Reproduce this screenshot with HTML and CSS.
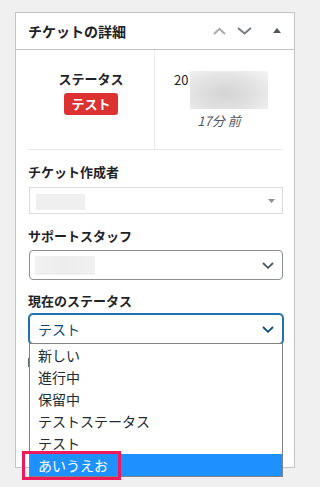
FILE: index.html
```html
<!DOCTYPE html>
<html lang="ja">
<head>
<meta charset="utf-8">
<title>チケットの詳細</title>
<link rel="stylesheet" href="styles.css">
</head>
<body>
<div class="panel">
  <div class="panel-head">
    <h2 class="panel-title">チケットの詳細</h2>
    <div class="head-actions">
      <svg class="ic ic-up" width="13" height="8" viewBox="0 0 13 8"><polyline points="1,7 6.5,1.8 12,7" fill="none" stroke="#a7aaad" stroke-width="2"/></svg>
      <svg class="ic ic-down" width="15" height="8" viewBox="0 0 15 8"><polyline points="1,1 7.5,6.5 14,1" fill="none" stroke="#787c82" stroke-width="2"/></svg>
      <svg class="ic ic-tri" width="8" height="5" viewBox="0 0 8 5"><polygon points="0,5 4,0 8,5" fill="#50575e"/></svg>
    </div>
  </div>
  <div class="panel-body">
    <div class="info">
      <div class="info-col info-status">
        <div class="info-label">ステータス</div>
        <span class="badge">テスト</span>
      </div>
      <div class="info-col info-date">
        <div class="date-row"><span class="date-text">20</span><span class="blur blur-lg"></span></div>
        <div class="ago">17分 前</div>
      </div>
    </div>
    <div class="fields">
      <div class="field field-1">
        <div class="field-label">チケット作成者</div>
        <div class="select select-light">
          <span class="blur blur-a"></span>
          <svg class="sel-tri" width="7" height="4" viewBox="0 0 7 4"><polygon points="0,0 7,0 3.5,4" fill="#8c8f94"/></svg>
        </div>
      </div>
      <div class="field field-2">
        <div class="field-label">サポートスタッフ</div>
        <div class="select select-std">
          <span class="blur blur-b"></span>
          <svg class="sel-chev" width="12" height="7" viewBox="0 0 12 7"><polyline points="1,1 6,5.8 11,1" fill="none" stroke="#50575e" stroke-width="1.8"/></svg>
        </div>
      </div>
      <div class="field field-3">
        <div class="field-label">現在のステータス</div>
        <div class="select select-focus">
          <span class="sel-value">テスト</span>
          <svg class="sel-chev" width="12" height="7" viewBox="0 0 12 7"><polyline points="1,1 6,5.8 11,1" fill="none" stroke="#0a4b78" stroke-width="1.8"/></svg>
          <ul class="dropdown">
            <li class="opt">新しい</li>
            <li class="opt">進行中</li>
            <li class="opt">保留中</li>
            <li class="opt">テストステータス</li>
            <li class="opt">テスト</li>
            <li class="opt opt-active">あいうえお</li>
          </ul>
          <div class="highlight-box"></div>
        </div>
      </div>
      <div class="under-mark"></div>
    </div>
  </div>
</div>
</body>
</html>
```

FILE: styles.css
```css
html, body {
  margin: 0;
  padding: 0;
}
body {
  background: #f0f0f1;
  font-family: "Noto Sans CJK JP", "Noto Sans", sans-serif;
  color: #1d2327;
  width: 309px;
  height: 487px;
  overflow: hidden;
}
.panel {
  margin: 12px 0 0 15px;
  width: 280px;
  box-sizing: border-box;
  background: #fff;
  border: 1px solid #c3c4c7;
}
.panel-head {
  height: 36px;
  border-bottom: 1px solid #c3c4c7;
  display: flex;
  align-items: center;
  justify-content: space-between;
  padding: 0 13px 0 12px;
}
.panel-title {
  margin: 0;
  font-size: 14px;
  font-weight: 600;
  line-height: 18px;
  color: #1d2327;
}
.head-actions {
  display: flex;
  align-items: center;
  padding-bottom: 1px;
}
.ic { display: block; }
.ic-up { margin-right: 11px; }
.ic-down { margin-right: 21px; }
.panel-body {
  padding: 0 12px 100px 12px;
}
.info {
  display: grid;
  grid-template-columns: 127px 127px;
  height: 99px;
  border-bottom: 1px solid #e6e6e6;
}
.info-status {
  border-right: 1px solid #ebebeb;
  padding-top: 20px;
  text-align: center;
}
.info-label {
  font-size: 13px;
  font-weight: 600;
  line-height: 18px;
}
.badge {
  display: inline-block;
  margin-top: 5px;
  width: 54px;
  height: 22px;
  line-height: 22px;
  background: #dc3232;
  color: #fff;
  font-size: 13px;
  font-weight: 700;
  border-radius: 3px;
}
.info-date {
  padding-top: 21px;
}
.date-row {
  display: flex;
  align-items: flex-start;
  padding-left: 19px;
}
.date-text {
  font-size: 13px;
  line-height: 18px;
  width: 16px;
}
.blur { display: block; }
.blur-lg {
  width: 78px;
  height: 38px;
  background: radial-gradient(ellipse at 45% 60%, #d4d4d4 0%, #e0e0e0 45%, #f4f4f4 100%);
}
.ago {
  margin-top: 3px;
  text-align: center;
  font-size: 13px;
  line-height: 18px;
  font-style: italic;
  color: #50575e;
  padding-left: 1px;
}
.fields {
  padding-top: 13px;
}
.field-label {
  font-size: 13px;
  font-weight: 600;
  line-height: 18px;
}
.field-2 { margin-top: 13px; }
.field-3 { margin-top: 12px; }
.select {
  position: relative;
  box-sizing: border-box;
  width: 254px;
  margin-left: 1px;
  display: flex;
  align-items: center;
  background: #fff;
}
.select-light {
  margin-top: 6px;
  height: 27px;
  border: 1px solid #dcdcde;
  padding-left: 6px;
}
.blur-a {
  width: 49px;
  height: 16px;
  margin-top: 3px;
  background: #efefef;
}
.sel-tri {
  position: absolute;
  right: 7px;
  top: 11px;
}
.select-std {
  margin-top: 5px;
  height: 30px;
  border: 1px solid #8c8f94;
  border-radius: 4px;
  padding-left: 5px;
}
.blur-b {
  width: 60px;
  height: 19px;
  background: linear-gradient(90deg, #f2f2f2 0%, #ececec 50%, #f0f0f0 100%);
}
.sel-chev {
  position: absolute;
  right: 8px;
  top: 11px;
}
.select-focus {
  margin-top: 4px;
  height: 30px;
  border: 1px solid #2271b1;
  box-shadow: 0 0 0 1px #2271b1;
  border-radius: 4px;
  padding-left: 8px;
}
.sel-value {
  font-size: 14px;
  line-height: 20px;
  color: #0a4b78;
}
.dropdown {
  position: absolute;
  left: -1px;
  top: 28px;
  width: 254px;
  box-sizing: border-box;
  margin: 0;
  padding: 0;
  list-style: none;
  background: #fff;
  border: 1px solid #828282;
  z-index: 2;
}
.opt {
  height: 22px;
  line-height: 22px;
  padding-left: 8px;
  font-size: 14px;
  color: #222b33;
}
.opt-active {
  background: #1e90ff;
  color: #fff;
}
.highlight-box {
  position: absolute;
  left: -8px;
  top: 136px;
  width: 99px;
  height: 29px;
  box-sizing: border-box;
  border: 3px solid #ef1a5c;
  z-index: 3;
}
.under-mark {
  margin-top: 14px;
  width: 1px;
  height: 9px;
  background: #646970;
}
```
